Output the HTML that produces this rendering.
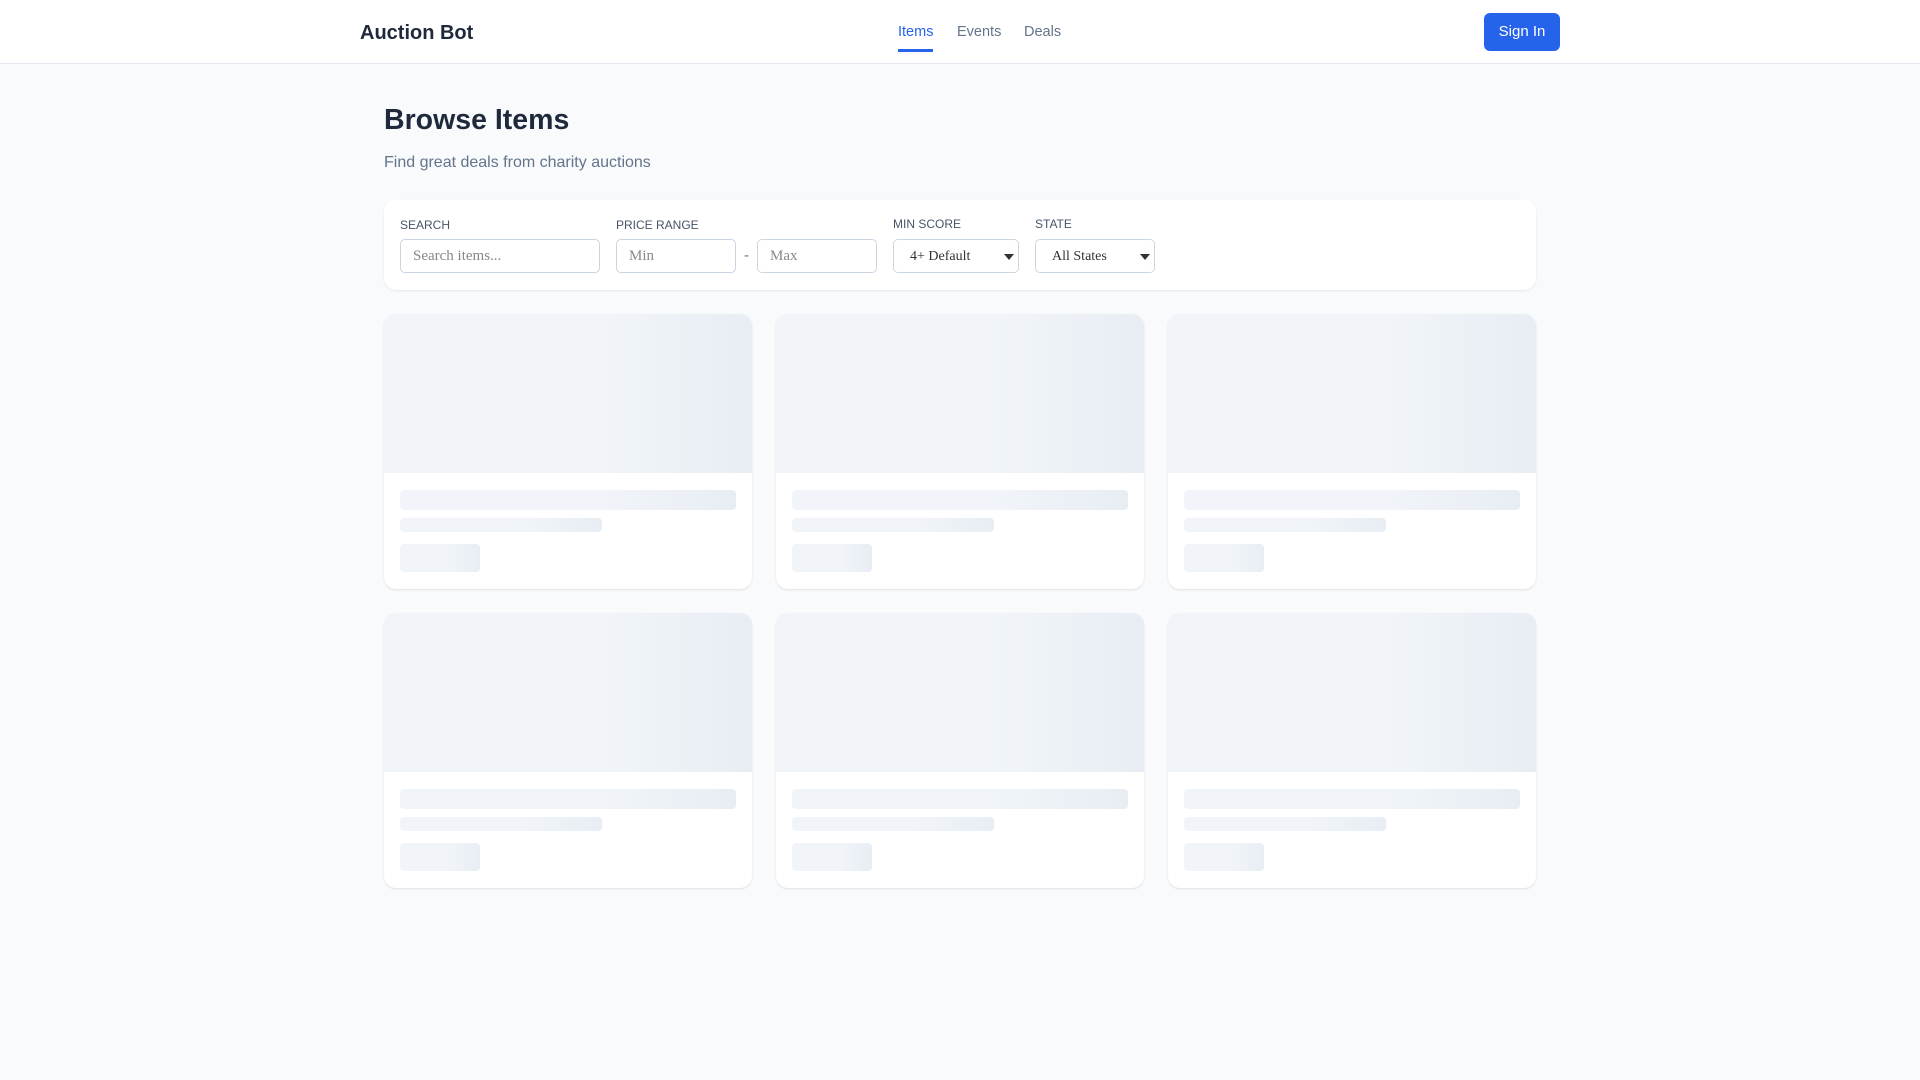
<!DOCTYPE html><html><head><style>
*{box-sizing:border-box;margin:0;padding:0}
body{width:1920px;height:1080px;background:#f8fafc;font-family:"Liberation Sans",sans-serif;position:relative;overflow:hidden}
.hdr{position:absolute;left:0;top:0;width:1920px;height:64px;background:#fff;border-bottom:1px solid #e2e8f0}
.logo{position:absolute;left:360px;top:22px;font-size:20px;font-weight:bold;color:#1e293b}
.nav{position:absolute;top:24px;font-size:14.5px;color:#64748b}
.btn{position:absolute;left:1484px;top:13px;width:76px;height:38px;background:#2563eb;color:#fff;border-radius:6px;font-size:15px;text-align:center;line-height:38px}
h1{position:absolute;left:384px;top:104px;font-size:28.5px;color:#1e293b}
.sub{position:absolute;left:384px;top:154px;font-size:16px;color:#64748b}
.fc{position:absolute;left:384px;top:200px;width:1152px;height:90px;background:#fff;border-radius:12px;box-shadow:0 1px 2px rgba(0,0,0,.08)}
.lb{position:absolute;font-size:12px;color:#475569;top:218px}
.in{position:absolute;top:239px;height:34px;border:1px solid #cbd5e1;border-radius:5px;background:#fff;font-family:"Liberation Serif",serif;font-size:15px;color:#888;padding:8px 12px}
.sel{color:#333;padding-left:16px;font-size:14px;padding-top:9px}
.sel:after{content:"";position:absolute;right:4px;top:14px;border:5px solid transparent;border-top:6px solid #333}
.card{position:absolute;width:368px;height:275px;background:#fff;border-radius:12px;box-shadow:0 1px 2px rgba(0,0,0,.1);overflow:hidden}
.g{background:linear-gradient(90deg,#f1f5f9 0%,#f1f5f9 60%,#e8edf4 100%);position:absolute;border-radius:4px}
</style></head><body>
<div class="hdr"><div class="logo">Auction Bot</div>
<div class="nav" style="left:898px;color:#2563eb">Items</div>
<div style="position:absolute;left:898px;top:49px;width:35px;height:3px;background:#2563eb"></div>
<div class="nav" style="left:957px">Events</div>
<div class="nav" style="left:1024px">Deals</div>
<div class="btn">Sign In</div></div>
<h1>Browse Items</h1>
<div class="sub">Find great deals from charity auctions</div>
<div class="fc"></div>
<div class="lb" style="left:400px">SEARCH</div>
<div class="lb" style="left:616px">PRICE RANGE</div>
<div class="lb" style="left:893px;top:217px">MIN SCORE</div>
<div class="lb" style="left:1035px;top:217px">STATE</div>
<div class="in" style="left:400px;width:200px">Search items...</div>
<div class="in" style="left:616px;width:120px">Min</div>
<div style="position:absolute;left:744px;top:247px;font-size:15px;color:#64748b">-</div>
<div class="in" style="left:757px;width:120px">Max</div>
<div class="in sel" style="left:893px;width:126px">4+ Default</div>
<div class="in sel" style="left:1035px;width:120px">All States</div>
<div id="cards"></div>
<script>
var h='';[314,613].forEach(function(y){[384,776,1168].forEach(function(x){
h+='<div class="card" style="left:'+x+'px;top:'+y+'px"><div class="g" style="left:0;top:0;width:368px;height:159px;border-radius:0"></div><div class="g" style="left:16px;top:176px;width:336px;height:20px"></div><div class="g" style="left:16px;top:204px;width:202px;height:14px"></div><div class="g" style="left:16px;top:230px;width:80px;height:28px"></div></div>';});});
document.getElementById('cards').innerHTML=h;
</script>
</body></html>
